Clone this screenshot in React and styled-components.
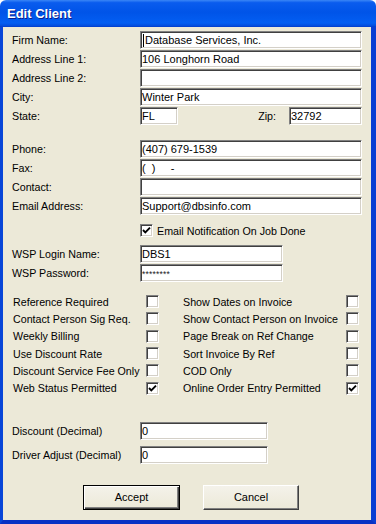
import styled, { createGlobalStyle } from 'styled-components';

const GlobalStyle = createGlobalStyle`
    html, body {
        margin: 0;
        padding: 0;
        background: #ffffff;
    }
    body {
        font-family: "Liberation Sans", Arial, sans-serif;
        font-size: 10.7px;
        color: #000000;
    }
`;

const Window = styled.div`
    width: 376px;
    height: 524px;
    display: flex;
    flex-direction: column;
    border-radius: 6px 6px 0 0;
    overflow: hidden;
`;

const TitleBar = styled.div`
    height: 27px;
    flex: none;
    display: flex;
    align-items: center;
    padding-left: 7px;
    background: linear-gradient(180deg, #3a86f6 0%, #0a5cee 10%, #0054e8 45%, #035ef2 85%, #034cdc 96%, #0339c6 100%);
    color: #ffffff;
    font-weight: bold;
    font-size: 13px;
    text-shadow: 1px 1px #0b1d8c;
`;

const Body = styled.div`
    flex: 1;
    display: flex;
    flex-direction: column;
    background: #ece9d8;
    padding: 4px 9px 0 9px;
    border-left: 3px solid #0846d8;
    border-right: 5px solid #0a3dd3;
    border-bottom: 4px solid #0831c4;
`;

const Section = styled.div`
    display: flex;
    flex-direction: column;
    gap: ${(p) => p.$gap ?? 1}px;
    margin-top: ${(p) => p.$top ?? 0}px;
`;

const Row = styled.div`
    display: flex;
    align-items: center;
    height: 18px;
`;

const Label = styled.span`
    width: 128px;
    flex: none;
    white-space: nowrap;
`;

const TextBox = styled.div`
    box-sizing: border-box;
    height: 18px;
    width: ${(p) => (p.$w ? `${p.$w}px` : 'auto')};
    flex: ${(p) => (p.$w ? 'none' : '1')};
    display: flex;
    align-items: center;
    padding-left: 1px;
    background: #ffffff;
    border: 1px solid;
    border-color: #808080 #ffffff #ffffff #808080;
    box-shadow: inset 1px 1px #404040, inset -1px -1px #d4d0c8;
    font-size: 11px;
    white-space: pre;
    overflow: hidden;
`;

const Caret = styled.span`
    display: inline-block;
    width: 1px;
    height: 13px;
    background: #000000;
    margin: 0 1px 0 1px;
`;

const Masked = styled.span`
    font-size: 8.5px;
    letter-spacing: 0.2px;
    padding-top: 1px;
    color: #202020;
`;

const ZipLabel = styled.span`
    margin-left: auto;
    margin-right: 13px;
`;

const Box = styled.span`
    box-sizing: border-box;
    width: 13px;
    height: 13px;
    flex: none;
    display: inline-flex;
    align-items: center;
    justify-content: center;
    background: #ffffff;
    border: 1px solid;
    border-color: #808080 #ffffff #ffffff #808080;
    box-shadow: inset 1px 1px #404040, inset -1px -1px #d4d0c8;
`;

const CheckRow = styled.div`
    display: flex;
    align-items: center;
    gap: 4px;
    height: 13px;
    margin-top: 9px;
    padding-left: 128px;
`;

const Options = styled.div`
    display: grid;
    grid-template-columns: 147px 177px;
    grid-auto-rows: 17.33px;
    column-gap: 23px;
    margin-top: 11px;
`;

const Option = styled.div`
    display: flex;
    align-items: center;
    justify-content: space-between;
    padding-left: 1px;
    white-space: nowrap;
`;

const Buttons = styled.div`
    display: flex;
    gap: 23px;
    margin-top: 21px;
    padding-left: 71px;
`;

const Button = styled.button`
    box-sizing: border-box;
    width: ${(p) => (p.$default ? 97 : 96)}px;
    height: 25px;
    font-family: "Liberation Sans", Arial, sans-serif;
    font-size: 11px;
    color: #000000;
    background: linear-gradient(180deg, #f4f2ea 0%, #ece9d8 100%);
    padding: 0;
    border: 1px solid;
    border-color: ${(p) => (p.$default ? '#000000' : '#ffffff #404040 #404040 #ffffff')};
    box-shadow: ${(p) =>
        p.$default
            ? 'inset 1px 1px #ffffff, inset -1px -1px #404040, inset -2px -2px #808080'
            : 'inset -1px -1px #808080'};
`;

const Check = ({ checked }) => (
    <Box>
        {checked && (
            <svg width="9" height="9" viewBox="0 0 9 9">
                <polyline points="1,4 3.3,6.3 8,1.6" fill="none" stroke="#000" strokeWidth="1.9" />
            </svg>
        )}
    </Box>
);

const Field = ({ label, value, width, caret }) => (
    <Row>
        <Label>{label}</Label>
        <TextBox $w={width}>
            {caret && <Caret />}
            {value}
        </TextBox>
    </Row>
);

const leftOptions = [
    ['Reference Required', false],
    ['Contact Person Sig Req.', false],
    ['Weekly Billing', false],
    ['Use Discount Rate', false],
    ['Discount Service Fee Only', false],
    ['Web Status Permitted', true],
];

const rightOptions = [
    ['Show Dates on Invoice', false],
    ['Show Contact Person on Invoice', false],
    ['Page Break on Ref Change', false],
    ['Sort Invoice By Ref', false],
    ['COD Only', false],
    ['Online Order Entry Permitted', true],
];

const App = () => {
    // 두 열을 행 순서로 섞어서 grid에 넣음
    const options = leftOptions.flatMap((item, i) => [item, rightOptions[i]]);

    return (
        <>
            <GlobalStyle />
            <Window>
                <TitleBar>Edit Client</TitleBar>
                <Body>
                    <Section>
                        <Field label="Firm Name:" value="Database Services, Inc." caret />
                        <Field label="Address Line 1:" value="106 Longhorn Road" />
                        <Field label="Address Line 2:" value="" />
                        <Field label="City:" value="Winter Park" />
                        <Row>
                            <Label>State:</Label>
                            <TextBox $w={38}>FL</TextBox>
                            <ZipLabel>Zip:</ZipLabel>
                            <TextBox $w={73}>32792</TextBox>
                        </Row>
                    </Section>

                    <Section $top={15}>
                        <Field label="Phone:" value="(407) 679-1539" />
                        <Field label="Fax:" value="(  )     -" />
                        <Field label="Contact:" value="" />
                        <Field label="Email Address:" value="Support@dbsinfo.com" />
                    </Section>

                    <CheckRow>
                        <Check checked />
                        <span>Email Notification On Job Done</span>
                    </CheckRow>

                    <Section $top={8}>
                        <Field label="WSP Login Name:" value="DBS1" width={143} />
                        <Row>
                            <Label>WSP Password:</Label>
                            <TextBox $w={143}>
                                <Masked>********</Masked>
                            </TextBox>
                        </Row>
                    </Section>

                    <Options>
                        {options.map(([text, checked]) => (
                            <Option key={text}>
                                <span>{text}</span>
                                <Check checked={checked} />
                            </Option>
                        ))}
                    </Options>

                    <Section $top={25} $gap={6}>
                        <Field label="Discount (Decimal)" value="0" width={128} />
                        <Field label="Driver Adjust (Decimal)" value="0" width={128} />
                    </Section>

                    <Buttons>
                        <Button $default>Accept</Button>
                        <Button>Cancel</Button>
                    </Buttons>
                </Body>
            </Window>
        </>
    );
};

export default App;
